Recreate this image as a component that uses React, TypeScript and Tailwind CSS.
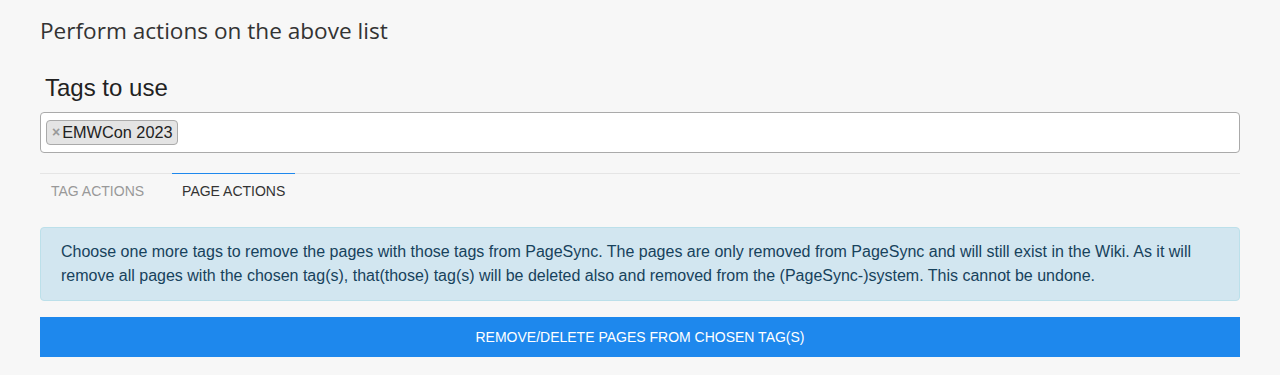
export default function App() {
  return (
    <div className="min-h-[375px] bg-[#f7f7f7] px-10 pt-[13px]" style={{ fontFamily: '"Liberation Sans", Arial, sans-serif' }}>
      <h2 className="text-[22.6px] leading-[36px] text-[#333] font-['Open_Sans',sans-serif]">Perform actions on the above list</h2>

      <label className="mt-[22px] block pl-[5px] text-[24px] leading-[34px] text-[#222]">Tags to use</label>

      <div className="mt-[7px] flex h-[41px] items-center rounded-[4px] border border-[#aaa] bg-white px-[5px]">
        <span className="flex h-[25px] items-center rounded-[4px] border border-[#aaa] bg-[#e4e4e4] pl-[5px] pr-[4px] text-[16.3px] text-[#222]">
          <span className="mr-[2px] text-[14px] font-bold text-[#999]">×</span>
          EMWCon 2023
        </span>
      </div>

      <div className="mt-[20px] flex border-t border-[#e5e5e5] text-[14px] uppercase">
        <div className="-mt-px border-t border-transparent px-[11px] pt-[7px] pb-[10px] text-[#999]">Tag actions</div>
        <div className="-mt-px ml-[17px] border-t border-[#1e88ed] px-[10px] pt-[7px] pb-[10px] text-[#333]">Page actions</div>
      </div>

      <div className="mt-[15px] rounded-[4px] border border-[#bce0ea] bg-[#d2e6f0] px-[20px] py-[12px] text-[16px] leading-[24px] text-[#17425c]">
        Choose one more tags to remove the pages with those tags from PageSync. The pages are only removed from PageSync and will still exist in the Wiki. As it will remove all pages with the chosen tag(s), that(those) tag(s) will be deleted also and removed from the (PageSync-)system. This cannot be undone.
      </div>

      <button className="mt-[16px] flex h-[40px] w-full items-center justify-center bg-[#1e88ed] text-[14px] uppercase text-white">
        Remove/delete pages from chosen tag(s)
      </button>
    </div>
  )
}
